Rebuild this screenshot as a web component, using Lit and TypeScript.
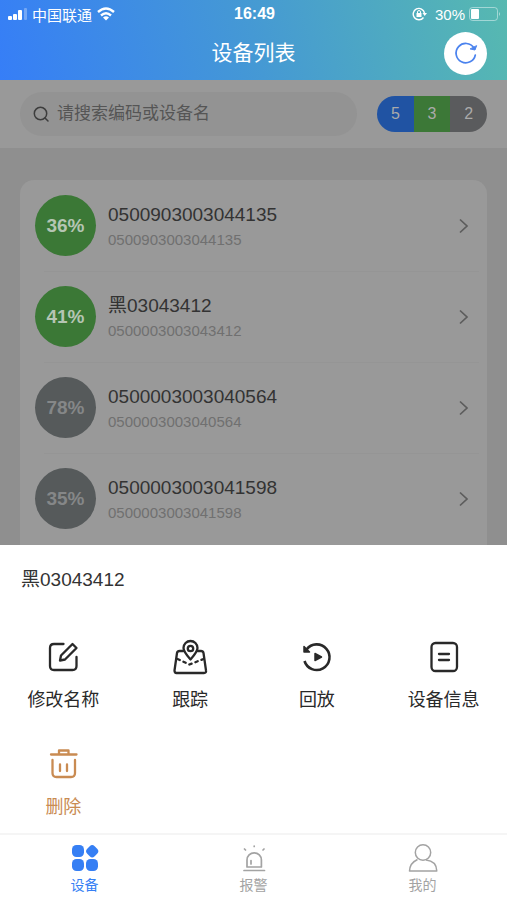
import { LitElement, html, css, svg } from "lit";
import { customElement } from "lit/decorators.js";
import { classMap } from "lit/directives/class-map.js";

interface Device { level: number; name: string; code: string; online: boolean; }

const devices: Device[] = [
  { level: 36, name: "0500903003044135", code: "0500903003044135", online: true },
  { level: 41, name: "黑03043412", code: "0500003003043412", online: true },
  { level: 78, name: "0500003003040564", code: "0500003003040564", online: false },
  { level: 35, name: "0500003003041598", code: "0500003003041598", online: false },
];

const stroke = (body: unknown, width = 2.3) => html`<svg class="icon" viewBox="0 0 36 36" fill="none"
  stroke="currentColor" stroke-width=${width} stroke-linecap="round" stroke-linejoin="round" aria-hidden="true">${body}</svg>`;

const actions = [
  { label: "修改名称", danger: false, icon: stroke(svg`<path d="M18.500 5H9Q5 5 5 9V27Q5 31 9 31H27.500Q31.500 31 31.500 27V18"/><path d="M27.500 5 31.500 9 20 20.500 15 21.500 16 16.500Z"/>`) },
  { label: "跟踪", danger: false, icon: stroke(svg`<path d="M11.500 12H7.500Q5.500 12 5 14L2.500 31.500Q2.500 34 4.500 34H32Q34.500 34 34 31.500L31.500 14Q31 12 29 12H25.500"/><path d="M18.500 20.500C14.500 16 11.500 12.500 11.500 9A7 7 0 0 1 25.500 9C25.500 12.500 22.500 16 18.500 20.500Z"/><circle cx="18.500" cy="9.500" r="2.700"/><path d="M5.500 20 17.500 25.500 31.500 20" stroke-dasharray="2.500 4"/>`) },
  { label: "回放", danger: false, icon: stroke(svg`<path d="M7.500 10.500A12.800 12.800 0 1 1 5.500 22" stroke-width="2.600" stroke-linecap="butt"/><path d="M5 7.500V13H10.500Z" fill="currentColor" stroke-width="1.500"/><path d="M16 14.500V21.500L22.500 18Z" fill="currentColor" stroke-width="1.500"/>`) },
  { label: "设备信息", danger: false, icon: stroke(svg`<rect x="5.500" y="4" width="25.500" height="28" rx="4"/><path d="M13 15H23M13 21H23"/>`) },
  { label: "删除", danger: true, icon: stroke(svg`<path d="M6 8.500H31.500M14 8V4.500H23.500V8M7.500 14V27Q7.500 31 11.500 31H26Q30 31 30 27V14M15 18.500V25M22 18.500V25"/>`) },
];

const tabs = [
  { label: "设备", active: true, icon: svg`<g fill="currentColor"><rect x="2" y="2" width="12" height="12" rx="4.500"/><rect x="2" y="16" width="12" height="12" rx="4.500"/><rect x="16" y="16" width="12" height="12" rx="4.500"/><rect x="17" y="3" width="10.500" height="10.500" rx="3.500" transform="rotate(45 22.200 8.200)"/></g>` },
  { label: "报警", active: false, icon: svg`<g fill="none" stroke="currentColor" stroke-width="1.700" stroke-linecap="round" stroke-linejoin="round"><path d="M8 24V17A7.200 7.200 0 0 1 22.400 17V24ZM5 27.500H25.500M12 21V17.500M15.200 3V3.500M5.500 6 6.500 7M25 6 24 7"/></g>` },
  { label: "我的", active: false, icon: svg`<g fill="none" stroke="currentColor" stroke-width="1.500" stroke-linejoin="round"><circle cx="15" cy="9.500" r="7.700"/><path d="M9.500 16.500Q1.800 20 1.500 28H28.800Q28.500 18 18 17"/></g>` },
];

@customElement("app-root")
class AppRoot extends LitElement {
  static styles = css`
    :host { display: flex; flex-direction: column; min-height: 100vh; background: #8f8f8f; color: #333;
      font-family: "Liberation Sans", "Noto Sans CJK SC", sans-serif; }
    * { box-sizing: border-box; }
    button { border: 0; padding: 0; background: none; font: inherit; color: inherit; }
    h1, h2, ul, p { margin: 0; padding: 0; font-weight: 400; }
    .top { height: 80px; color: #fff; background: linear-gradient(75deg, #367ef7 0%, #4599d4 50%, #57b9b0 100%); }
    .status { display: grid; grid-template-columns: 1fr auto 1fr; align-items: center; height: 28px; padding: 0 6px 0 8px; font-size: 15px; }
    .side { display: flex; align-items: center; gap: 4px; }
    .right { justify-content: flex-end; }
    .right span { margin-left: 4px; }
    .time { font-size: 16px; font-weight: 700; }
    .title { display: grid; grid-template-columns: 1fr auto 1fr; align-items: center; height: 50px; padding: 0 20px; }
    .title h1 { grid-column: 2; font-size: 21px; line-height: 28px; }
    .refresh { justify-self: end; display: grid; place-items: center; width: 43px; height: 43px; border-radius: 50%; background: #fff; color: #4b83ee; }
    .search { display: flex; align-items: center; gap: 20px; height: 68px; padding: 0 20px; background: #999; }
    .field { flex: 1; min-width: 0; display: flex; align-items: center; gap: 7px; height: 44px; padding: 0 13px; border-radius: 22px; background: #939393; color: #3d3d3d; }
    .field input { flex: 1; min-width: 0; border: 0; padding: 0; background: none; outline: 0; font: inherit; font-size: 17px; line-height: 24px; }
    .field input::placeholder { color: #555; opacity: 1; }
    .counts { display: flex; width: 110px; height: 36px; border-radius: 18px; overflow: hidden; color: #aaa; font-size: 16px; line-height: 36px; text-align: center; }
    .counts span { flex: 1; }
    .all { background: #2053a3; } .on { background: #3c7837; } .off { background: #5a5b5d; }
    .list { flex: 1; min-height: 0; list-style: none; margin: 32px 20px 0; background: #999; border-radius: 14px 14px 0 0; }
    .row { display: flex; align-items: center; gap: 12px; width: 100%; height: 91px; padding: 0 15px; text-align: left; }
    .list li + li { background: linear-gradient(#959595, #959595) 24px 0 / calc(100% - 32px) 1px no-repeat; }
    .badge { display: grid; place-items: center; width: 61px; height: 61px; border-radius: 50%; background: #565a5b; color: #858788; font-size: 19px; font-weight: 700; }
    .badge.online { background: #3b7836; color: #b5c5b3; }
    .text { flex: 1; display: flex; flex-direction: column; gap: 2px; }
    .name { font-size: 19px; line-height: 26px; color: #333; }
    .code { font-size: 15px; line-height: 20px; color: #707070; }
    .chevron { width: 18px; height: 18px; color: #5c5c5c; }
    .sheet { height: 288px; background: #fff; padding: 21px 0 0; }
    .sheet h2 { padding: 0 21px; font-size: 19px; line-height: 28px; }
    .actions { display: grid; grid-template-columns: repeat(4, 1fr); margin-top: 45px; }
    .action { display: flex; flex-direction: column; align-items: center; gap: 11px; height: 107px; font-size: 18px; line-height: 28px; color: #292929; }
    .action.danger { color: #c98b52; }
    .icon { width: 36px; height: 36px; }
    .tabs { display: grid; grid-template-columns: repeat(3, 1fr); height: 67px; padding-top: 8px; background: #fff; border-top: 2px solid #f5f5f5; }
    .tab { display: flex; flex-direction: column; align-items: center; gap: 3px; color: #a3a3a3; font-size: 14px; line-height: 18px; text-decoration: none; }
    .tab.active { color: #367ff4; }
  `;

  render() {
    return html`
      <header class="top">
        <div class="status">
          <div class="side">
            <svg width="20" height="14" viewBox="0 0 20 14" fill="#fff" aria-hidden="true"><rect y="9" width="4" height="4" rx="1"/><rect x="5" y="7" width="4" height="6" rx="1"/><rect x="10" y="3" width="4" height="10" rx="1"/><rect x="16" y="1" width="3" height="12" rx="1" opacity=".3"/></svg>
            <span>中国联通</span>
            <svg width="20" height="14" viewBox="0 0 20 14" fill="none" stroke="#fff" stroke-width="2.400" aria-hidden="true"><path d="M2 5Q10-2 18 5M5 8.500Q10 4 15 8.500"/><path d="M7 10.500Q10 8 13 10.500L10 13.500Z" fill="#fff" stroke="none"/></svg>
          </div>
          <span class="time">16:49</span>
          <div class="side right">
            <svg width="15" height="14" viewBox="0 0 15 14" fill="none" stroke="#fff" stroke-width="1.400" aria-hidden="true"><path d="M11.500 10.500A5.700 5.700 0 1 1 12.500 6"/><path d="M10.500 6H15L12.700 9Z" fill="#fff" stroke="none"/><rect x="4.500" y="6" width="5" height="4" fill="#fff" stroke="none"/><path d="M5.500 6V5Q5.500 3.500 7 3.500T8.500 5V6" stroke-width="1"/></svg>
            <span>30%</span>
            <svg width="32" height="14" viewBox="0 0 32 14" aria-hidden="true"><rect x=".5" y=".5" width="28" height="13" rx="3" fill="none" stroke="#fff" opacity=".45"/><rect x="2" y="2" width="8" height="10" rx="1" fill="#fff"/><path d="M30 5Q32 7 30 9Z" fill="#fff" opacity=".5"/></svg>
          </div>
        </div>
        <div class="title">
          <h1>设备列表</h1>
          <button class="refresh" aria-label="刷新">
            <svg width="24" height="24" viewBox="0 0 24 24" fill="none" stroke="currentColor" stroke-width="1.700" stroke-linecap="round" stroke-linejoin="round" aria-hidden="true"><path d="M21.300 14A9.700 9.700 0 1 1 20 7"/><path d="M16.500 8 21 9 22.500 5Z" fill="currentColor" stroke-width="1"/></svg>
          </button>
        </div>
      </header>
      <div class="search">
        <label class="field">
          <svg width="17" height="17" viewBox="0 0 17 17" fill="none" stroke="currentColor" stroke-width="1.500" stroke-linecap="round" aria-hidden="true"><circle cx="7.500" cy="7.500" r="6.200"/><path d="M12 12 15 15"/></svg>
          <input type="search" placeholder="请搜索编码或设备名" aria-label="请搜索编码或设备名">
        </label>
        <div class="counts"><span class="all">5</span><span class="on">3</span><span class="off">2</span></div>
      </div>
      <ul class="list">
        ${devices.map((d) => html`<li><button class="row">
          <span class=${classMap({ badge: true, online: d.online })}>${d.level}%</span>
          <span class="text"><span class="name">${d.name}</span><span class="code">${d.code}</span></span>
          <svg class="chevron" viewBox="0 0 18 18" fill="none" stroke="currentColor" stroke-width="1.700" aria-hidden="true"><path d="M6 2.500 13 9 6 15.500"/></svg>
        </button></li>`)}
      </ul>
      <section class="sheet">
        <h2>黑03043412</h2>
        <div class="actions">
          ${actions.map((a) => html`<button class=${classMap({ action: true, danger: a.danger })}>${a.icon}<span>${a.label}</span></button>`)}
        </div>
      </section>
      <nav class="tabs">
        ${tabs.map((t) => html`<a href="#" class=${classMap({ tab: true, active: t.active })}>
          <svg width="30" height="30" viewBox="0 0 30 30" aria-hidden="true">${t.icon}</svg><span>${t.label}</span></a>`)}
      </nav>`;
  }
}
